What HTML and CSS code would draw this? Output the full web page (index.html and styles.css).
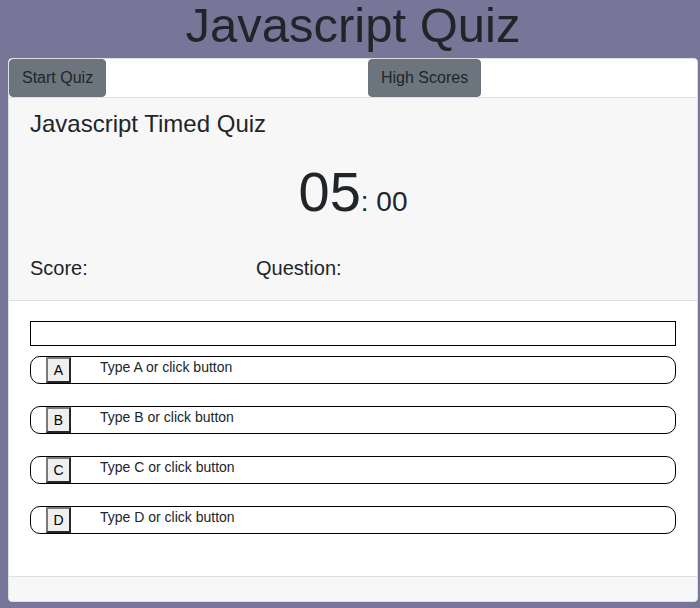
FILE: index.html
```html
<!DOCTYPE html>
<html lang="en">
<head>
<meta charset="utf-8">
<title>Javascript Quiz</title>
<link rel="stylesheet" href="styles.css">
</head>
<body>
<h1 class="page-title">Javascript Quiz</h1>
<div class="card">
  <div class="nav">
    <div class="nav-col"><button class="nav-btn">Start Quiz</button></div>
    <div class="nav-col"><button class="nav-btn">High Scores</button></div>
  </div>
  <div class="card-header">
    <h4 class="quiz-title">Javascript Timed Quiz</h4>
    <div class="timer"><span class="minutes">05</span><span class="seconds">: 00</span></div>
    <div class="stats">
      <h5 class="stat">Score:</h5>
      <h5 class="stat">Question:</h5>
    </div>
  </div>
  <div class="card-body">
    <div class="question-box"></div>
    <div class="answer"><button class="key">A</button><span class="answer-text">Type A or click button</span></div>
    <div class="answer"><button class="key">B</button><span class="answer-text">Type B or click button</span></div>
    <div class="answer"><button class="key">C</button><span class="answer-text">Type C or click button</span></div>
    <div class="answer"><button class="key">D</button><span class="answer-text">Type D or click button</span></div>
  </div>
  <div class="card-footer"></div>
</div>
</body>
</html>
```

FILE: styles.css
```css
html, body {
  margin: 0;
  padding: 0;
}
body {
  background: #777698;
  font-family: "Liberation Sans", Arial, sans-serif;
  color: #212529;
  height: 608px;
  overflow: hidden;
}
.page-title {
  margin: 0 2px 8px 8px;
  padding-top: 0;
  font-size: 49px;
  font-weight: 400;
  line-height: 50px;
  text-align: center;
  color: #212529;
}
.card {
  margin: 0 2px 0 8px;
  background: #fff;
  border: 1px solid #dfdfdf;
  border-radius: 4px;
  overflow: hidden;
}
.nav {
  display: grid;
  grid-template-columns: 359px 1fr;
  border-bottom: 1px solid #dfdfdf;
  background: #fff;
}
.nav-btn {
  display: block;
  font-family: "Liberation Sans", Arial, sans-serif;
  font-size: 16px;
  line-height: 24px;
  padding: 6px 12px;
  border: 1px solid #6c757d;
  border-radius: 4px;
  background: #6c757d;
  color: #212529;
  margin: 0;
}
.card-header {
  background: #f7f7f7;
  padding: 12px 21px;
  border-bottom: 1px solid #dfdfdf;
}
.quiz-title {
  margin: 0 0 19px;
  font-size: 24px;
  font-weight: 400;
  line-height: 28.8px;
}
.timer {
  text-align: center;
  font-size: 56px;
  line-height: 67.2px;
  margin: 0 0 31px;
}
.seconds {
  font-size: 28px;
  line-height: 1;
}
.stats {
  display: grid;
  grid-template-columns: 226px 1fr;
}
.stat {
  margin: 0 0 8px;
  font-size: 20px;
  font-weight: 400;
  line-height: 24px;
}
.card-body {
  padding: 20px 21px;
}
.question-box {
  height: 25px;
  box-sizing: border-box;
  border: 1px solid #000;
  margin-bottom: 10px;
}
.answer {
  display: flex;
  align-items: flex-start;
  height: 28px;
  box-sizing: border-box;
  border: 1px solid #000;
  border-radius: 10px;
  padding-left: 15px;
  margin-bottom: 22px;
}
.key {
  width: 25px;
  height: 26px;
  box-sizing: border-box;
  margin: 0;
  padding: 0;
  background: #efefef;
  border-style: solid;
  border-width: 2px;
  border-color: #7a7a7a #262626 #262626 #7a7a7a;
  font-family: "Liberation Sans", Arial, sans-serif;
  font-size: 14px;
  line-height: 22px;
  color: #000;
  text-align: center;
}
.answer-text {
  margin: 2px 0 0 29px;
  font-size: 14px;
  line-height: 16.8px;
  color: #212529;
}
.card-footer {
  background: #f7f7f7;
  border-top: 1px solid #dfdfdf;
  height: 24px;
}
```
